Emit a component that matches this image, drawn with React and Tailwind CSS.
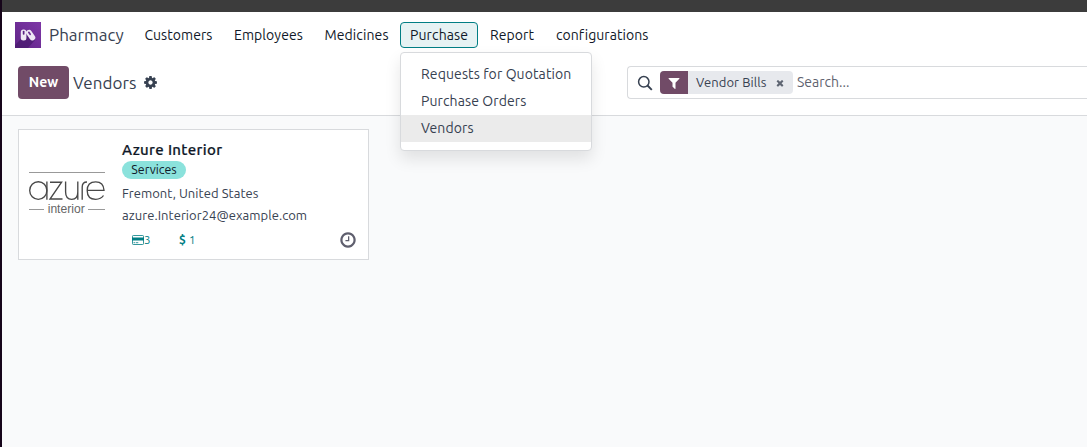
import React from "react";

const COG =
  "M1152 896q0-106-75-181t-181-75-181 75-75 181 75 181 181 75 181-75 75-181zm512-109v222q0 12-8 23t-20 13l-185 28q-19 54-39 91 35 50 107 138 10 12 10 25t-9 23q-27 37-99 108t-94 71q-12 0-26-9l-138-108q-44 23-91 38-16 136-29 186-7 28-36 28h-222q-14 0-24.5-8.5t-11.5-21.5l-28-184q-49-16-90-37l-141 107q-10 9-25 9-14 0-25-11-126-114-165-168-7-10-7-23 0-12 8-23 15-21 51-66.5t54-70.5q-27-50-41-99l-183-27q-13-2-21-12.5t-8-23.5v-222q0-12 8-23t19-13l186-28q14-46 39-92-40-57-107-138-10-12-10-24 0-10 9-23 26-36 98.5-107.5t94.5-71.5q13 0 26 10l138 107q44-23 91-38 16-136 29-186 7-28 36-28h222q14 0 24.5 8.5t11.5 21.5l28 184q49 16 90 37l142-107q9-9 24-9 13 0 25 10 129 119 165 170 7 8 7 22 0 12-8 23-15 21-51 66.5t-54 70.5q26 50 41 98l183 28q13 2 21 12.5t8 23.5z";
const FILTER =
  "M1595 295q17 41-14 70l-493 493v742q0 42-39 59-13 5-25 5-27 0-45-19l-256-256q-19-19-19-45v-486l-493-493q-31-29-14-70 17-39 59-39h1280q42 0 59 39z";
const TIMES =
  "M1490 1322q0 40-28 68l-136 136q-28 28-68 28t-68-28l-294-294-294 294q-28 28-68 28t-68-28l-136-136q-28-28-28-68t28-68l294-294-294-294q-28-28-28-68t28-68l136-136q28-28 68-28t68 28l294 294 294-294q28-28 68-28t68 28l136 136q28 28 28 68t-28 68l-294 294 294 294q28 28 28 68z";
const CLOCK =
  "M1024 544v448q0 14-9 23t-23 9h-320q-14 0-23-9t-9-23v-64q0-14 9-23t23-9h224v-352q0-14 9-23t23-9h64q14 0 23 9t9 23zm416 352q0-148-73-273t-198-198-273-73-273 73-198 198-73 273 73 273 198 198 273 73 273-73 198-198 73-273zm224 0q0 209-103 385.5t-279.5 279.5-385.5 103-385.5-103-279.5-279.5-103-385.5 103-385.5 279.5-279.5 385.5-103 385.5 103 279.5 279.5 103 385.5z";

function Glyph({ d, className }) {
  return (
    <svg viewBox="0 0 1792 1792" fill="currentColor" className={className}>
      <path d={d} />
    </svg>
  );
}

function AppLogo() {
  return (
    <svg viewBox="0 0 26 26" className="h-[26px] w-[26px] shrink-0">
      <defs>
        <linearGradient id="logo" x1="0" y1="1" x2="1" y2="0">
          <stop offset="0" stopColor="#602588" />
          <stop offset="1" stopColor="#7e37a6" />
        </linearGradient>
      </defs>
      <rect width="26" height="26" fill="url(#logo)" />
      <path d="M6 17L0 23V26H13L20 18L12 12Z" fill="#47196c" opacity="0.7" />
      <rect x="5.8" y="7.4" width="5.6" height="11" rx="2.5" fill="#eee6f4" />
      <rect x="7.8" y="8.8" width="1.7" height="4" rx="0.8" fill="#5b2384" />
      <g transform="rotate(-35 15.6 13.2)">
        <rect x="12.8" y="7.4" width="5.8" height="11.6" rx="2.8" fill="#eee6f4" />
        <rect x="14.9" y="9" width="1.7" height="4" rx="0.8" fill="#6a2b92" />
      </g>
    </svg>
  );
}

function AzureLogo() {
  return (
    <svg viewBox="0 0 76 44" fill="none" stroke="#484848" className="h-[44px] w-[76px]">
      <path d="M0 1.5H76M0 38.5H15M59 38.5H76" stroke="#999" strokeWidth="1.2" />
      <g strokeWidth="1.35">
        <ellipse cx="9.3" cy="19.5" rx="8.6" ry="8.8" />
        <path d="M17.9 10.5V28.7" />
        <path d="M21 11.2H32.6L21 28H33.5" />
        <path d="M36.6 10.5V21Q36.6 28.3 42.7 28.3Q48.8 28.3 48.8 21V10.5M48.8 20V28.7" />
        <path d="M53.2 28.7V16Q53.2 11 58 11" />
        <path d="M58.2 19.3H75Q74.6 10.8 66.7 10.8Q58.2 10.8 58.2 19.5Q58.2 28.3 66.7 28.3Q72 28.3 74.5 24.5" />
      </g>
      <text
        x="18.7"
        y="42"
        textLength="37"
        lengthAdjust="spacingAndGlyphs"
        fill="#666"
        stroke="none"
        className="font-['Liberation_Sans',sans-serif] text-[12px]"
      >
        interior
      </text>
    </svg>
  );
}

function MenuItem({ label, className }) {
  return (
    <button className={`flex h-[26px] items-center whitespace-nowrap text-left text-[14px] ${className}`}>
      {label}
    </button>
  );
}

function PurchaseMenu() {
  return (
    <div className="relative mr-3">
      <button className="flex h-[26px] w-[78px] items-center whitespace-nowrap rounded-[4px] border border-[#017e84] bg-[#e6f2f3] pl-[9px] text-[14px] tracking-[0.12px] text-gray-900">
        Purchase
      </button>
      <div className="absolute left-0 top-[30px] z-10 flex h-[99px] w-[192px] flex-col rounded-[4px] border border-[#d8dadd] bg-white pt-2 text-[14px] leading-[27px] tracking-[0.11px] text-[#374151] shadow-[0_8px_16px_rgba(0,0,0,0.1)]">
        <div className="h-[27px] whitespace-nowrap pl-5">Requests for Quotation</div>
        <div className="h-[27px] whitespace-nowrap pl-5">Purchase Orders</div>
        <div className="h-[27px] whitespace-nowrap bg-[#ebebeb] pl-5">Vendors</div>
      </div>
    </div>
  );
}

function NavBar() {
  return (
    <nav className="flex h-[46px] items-center pl-[13px] text-gray-900">
      <AppLogo />
      <div className="ml-2 w-[95px] whitespace-nowrap text-[17px] text-[#374151]">Pharmacy</div>
      <MenuItem label="Customers" className="w-[90px] pl-[0.4px] tracking-[0.08px]" />
      <MenuItem label="Employees" className="w-[90px] tracking-[0.08px]" />
      <MenuItem label="Medicines" className="w-[76px] pl-[0.4px] tracking-[0.12px]" />
      <PurchaseMenu />
      <MenuItem label="Report" className="w-[66px] tracking-[0.08px]" />
      <MenuItem label="configurations" className="tracking-[0.05px]" />
    </nav>
  );
}

function SearchBar() {
  return (
    <div className="ml-auto flex h-[33px] w-[460px] shrink-0 items-center rounded-l-[4px] border border-r-0 border-[#d8dadd] pl-[9px]">
      <svg viewBox="0 0 16 16" fill="none" stroke="#374151" strokeWidth="1.5" className="h-4 w-4">
        <circle cx="6.8" cy="6.8" r="5.2" />
        <path d="M10.5 10.5L14.8 14.8" strokeWidth="1.9" />
      </svg>
      <div className="ml-[7px] flex h-[23px] w-[133px] items-center overflow-hidden rounded-[4px] bg-[#e7e9ed] text-[13px] text-[#374151]">
        <div className="flex h-full w-7 items-center justify-center bg-[#714b67] text-white">
          <Glyph d={FILTER} className="h-[14px] w-[14px]" />
        </div>
        <span className="ml-2 w-[79px] whitespace-nowrap tracking-[0.1px]">Vendor Bills</span>
        <Glyph d={TIMES} className="h-[10px] w-[10px] text-[#5f6673]" />
      </div>
      <span className="ml-1 text-[14px] text-[#5f636f]">Search...</span>
    </div>
  );
}

function ControlPanel() {
  return (
    <div className="flex h-[49px] items-center pl-4">
      <button className="flex h-[33px] w-[51px] items-center justify-center rounded-[4px] bg-[#714b67] text-[14px] font-semibold text-white">
        New
      </button>
      <span className="ml-1 w-[70px] whitespace-nowrap text-[17px] tracking-[0.05px] text-[#374151]">Vendors</span>
      <Glyph d={COG} className="h-[15px] w-[15px] text-[#374151]" />
      <SearchBar />
    </div>
  );
}

function VendorCard() {
  return (
    <article className="flex h-[131px] w-[351px] border border-[#d8dadd] bg-white">
      <div className="flex w-[103px] shrink-0 items-start pl-[10px] pt-[41px]">
        <AzureLogo />
      </div>
      <div className="flex flex-1 flex-col pt-[9px] text-[13px] text-[#374151]">
        <div className="h-[22px] whitespace-nowrap text-[15px] font-medium leading-[22px] tracking-[0.34px] text-gray-900 [-webkit-text-stroke:0.2px]">
          Azure Interior
        </div>
        <div className="flex h-[18px] w-16 items-center justify-center rounded-full bg-[#8be2dc] pb-px text-[12.4px] text-gray-900">
          Services
        </div>
        <div className="mt-[3px] h-[22px] whitespace-nowrap leading-[22px] tracking-[0.06px]">Fremont, United States</div>
        <div className="h-[22px] whitespace-nowrap leading-[22px] tracking-[0.05px]">azure.Interior24@example.com</div>
        <div className="mt-[5px] flex h-[18px] items-center pl-[10px] text-[11.5px] text-[#017e84]">
          <svg viewBox="0 0 12 10" className="h-[10px] w-3">
            <rect x="0.5" y="0.5" width="11" height="9" rx="0.8" fill="none" stroke="currentColor" strokeWidth="0.8" />
            <path d="M0 2.5H12V5.5H0Z" fill="currentColor" />
            <path d="M1.5 7.7H3.3M4 7.7H6.3" stroke="currentColor" strokeWidth="0.8" />
          </svg>
          <span className="w-[35px]">3</span>
          <span className="w-[10px] text-[12px] font-bold">$</span>
          <span>1</span>
          <Glyph d={CLOCK} className="ml-auto mr-[11px] h-[18px] w-[18px] text-[#5f5f6e]" />
        </div>
      </div>
    </article>
  );
}

export default function App() {
  return (
    <div className="flex h-[447px] w-[1087px] overflow-hidden font-['Ubuntu','Noto_Sans',sans-serif]">
      <div className="w-[2px] shrink-0 bg-[#16051a]" />
      <div className="flex min-w-0 flex-1 flex-col bg-[#f9fafb]">
        <div className="h-3 shrink-0 bg-[#3c3c3c]" />
        <header className="h-[104px] shrink-0 border-b border-[#d8dadd] bg-white">
          <NavBar />
          <ControlPanel />
        </header>
        <main className="pl-4 pt-[13px]">
          <VendorCard />
        </main>
      </div>
    </div>
  );
}
